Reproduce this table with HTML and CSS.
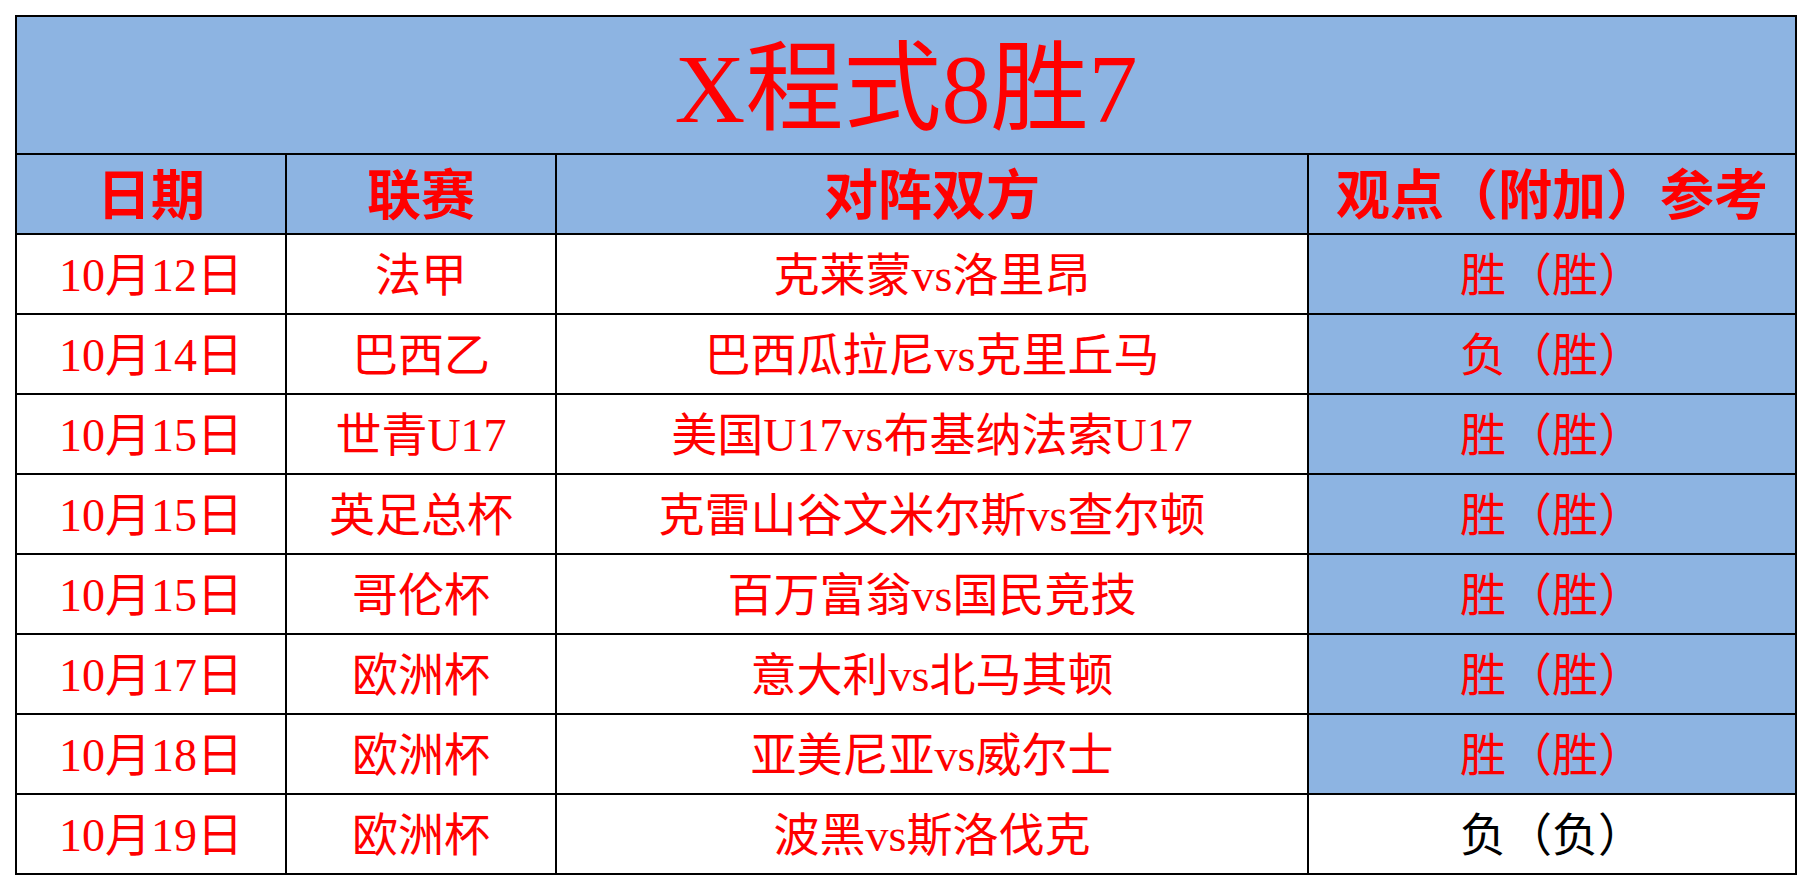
FILE: index.html
```html
<!DOCTYPE html>
<html lang="zh-CN">
<head>
<meta charset="utf-8">
<title>X程式8胜7</title>
<link rel="stylesheet" href="styles.css">
</head>
<body>
<div class="sheet">
  <div class="cell title">X程式8胜7</div>

  <div class="cell head">日期</div>
  <div class="cell head">联赛</div>
  <div class="cell head">对阵双方</div>
  <div class="cell head">观点（附加）参考</div>

  <div class="cell">10月12日</div>
  <div class="cell">法甲</div>
  <div class="cell">克莱蒙vs洛里昂</div>
  <div class="cell pick">胜（胜）</div>

  <div class="cell">10月14日</div>
  <div class="cell">巴西乙</div>
  <div class="cell">巴西瓜拉尼vs克里丘马</div>
  <div class="cell pick">负（胜）</div>

  <div class="cell">10月15日</div>
  <div class="cell">世青U17</div>
  <div class="cell">美国U17vs布基纳法索U17</div>
  <div class="cell pick">胜（胜）</div>

  <div class="cell">10月15日</div>
  <div class="cell">英足总杯</div>
  <div class="cell">克雷山谷文米尔斯vs查尔顿</div>
  <div class="cell pick">胜（胜）</div>

  <div class="cell">10月15日</div>
  <div class="cell">哥伦杯</div>
  <div class="cell">百万富翁vs国民竞技</div>
  <div class="cell pick">胜（胜）</div>

  <div class="cell">10月17日</div>
  <div class="cell">欧洲杯</div>
  <div class="cell">意大利vs北马其顿</div>
  <div class="cell pick">胜（胜）</div>

  <div class="cell">10月18日</div>
  <div class="cell">欧洲杯</div>
  <div class="cell">亚美尼亚vs威尔士</div>
  <div class="cell pick">胜（胜）</div>

  <div class="cell">10月19日</div>
  <div class="cell">欧洲杯</div>
  <div class="cell">波黑vs斯洛伐克</div>
  <div class="cell miss">负（负）</div>
</div>
</body>
</html>
```

FILE: styles.css
```css
html, body {
  margin: 0;
  padding: 0;
  background: #ffffff;
}

body {
  padding: 15px;
  font-family: "Liberation Serif", "Noto Sans CJK SC", serif;
}

.sheet {
  display: grid;
  grid-template-columns: 270px 270px 752px 488px;
  grid-template-rows: 138px repeat(9, 80px);
  width: 1782px;
  box-sizing: border-box;
  border-left: 2px solid #000;
  border-top: 2px solid #000;
}

.cell {
  box-sizing: border-box;
  border-right: 2px solid #000;
  border-bottom: 2px solid #000;
  display: flex;
  align-items: center;
  justify-content: center;
  padding-top: 4px;
  color: #ff0000;
  font-size: 46px;
  line-height: 1;
  white-space: nowrap;
  background: #ffffff;
}

.title {
  grid-column: 1 / -1;
  background: #8db4e2;
  font-size: 98px;
  padding-top: 8px;
}

.head {
  background: #8db4e2;
  font-size: 54px;
  font-weight: bold;
  padding-top: 6px;
}

.pick {
  background: #8db4e2;
}

.miss {
  color: #000000;
}
```
